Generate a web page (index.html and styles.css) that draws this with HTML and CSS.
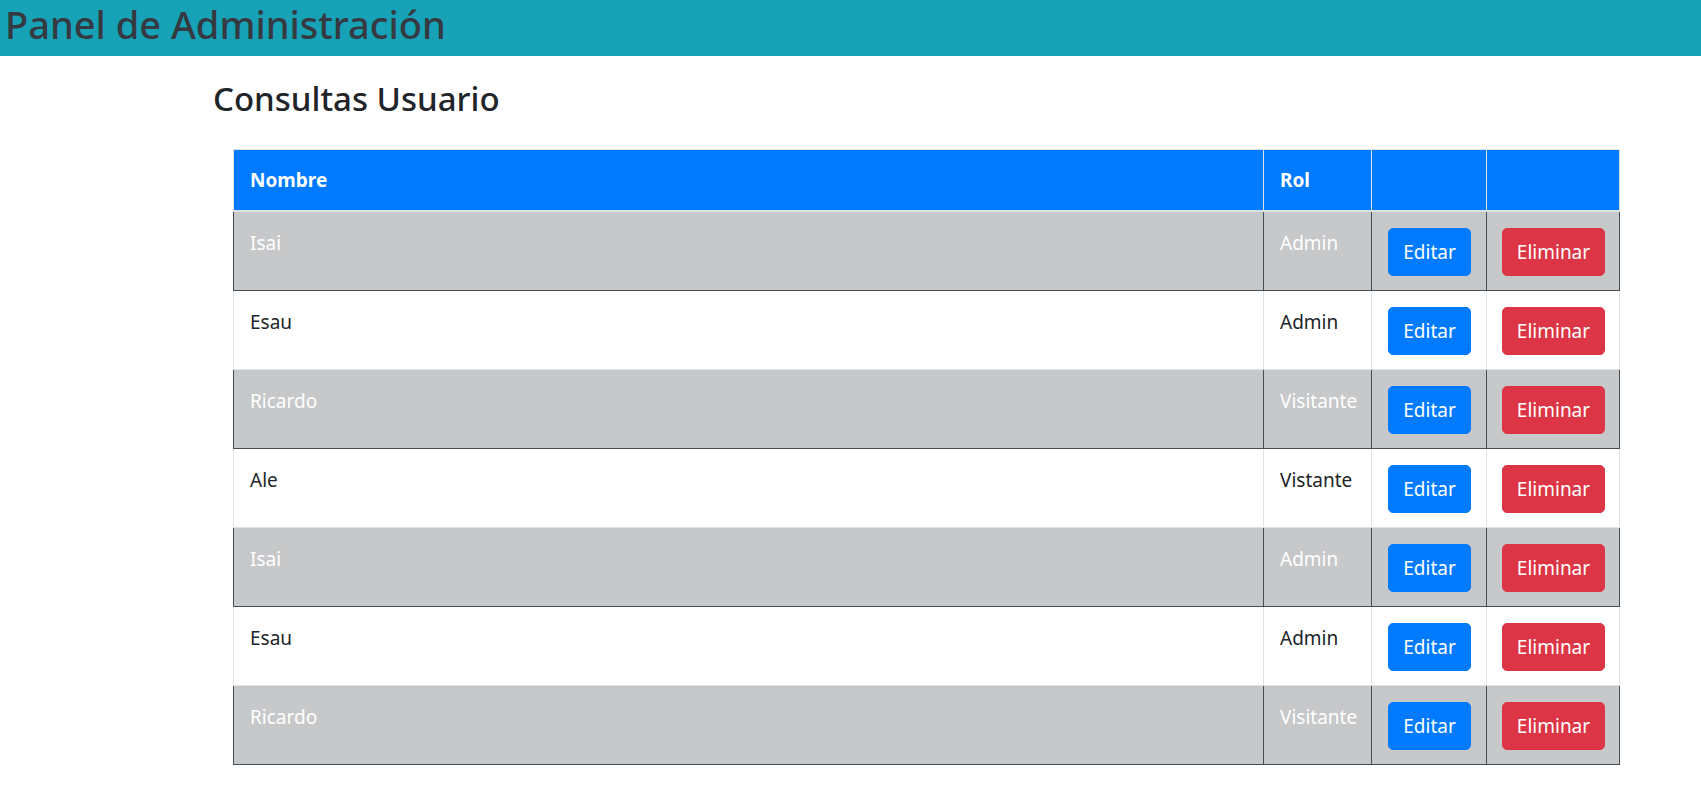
FILE: index.html
```html
<!DOCTYPE html>
<html lang="es">
<head>
<meta charset="utf-8">
<title>Panel de Administración</title>
<link rel="stylesheet" href="styles.css">
</head>
<body>
<header class="topbar">
  <h1 class="brand">Panel de Administración</h1>
</header>
<main class="content">
  <h2 class="section-title">Consultas Usuario</h2>
  <table class="users">
    <colgroup>
      <col class="c-name"><col class="c-role"><col class="c-edit"><col class="c-del">
    </colgroup>
    <thead>
      <tr><th>Nombre</th><th>Rol</th><th></th><th></th></tr>
    </thead>
    <tbody>
      <tr class="shaded"><td>Isai</td><td>Admin</td><td><button class="btn btn-edit">Editar</button></td><td><button class="btn btn-del">Eliminar</button></td></tr>
      <tr><td>Esau</td><td>Admin</td><td><button class="btn btn-edit">Editar</button></td><td><button class="btn btn-del">Eliminar</button></td></tr>
      <tr class="shaded"><td>Ricardo</td><td>Visitante</td><td><button class="btn btn-edit">Editar</button></td><td><button class="btn btn-del">Eliminar</button></td></tr>
      <tr><td>Ale</td><td>Vistante</td><td><button class="btn btn-edit">Editar</button></td><td><button class="btn btn-del">Eliminar</button></td></tr>
      <tr class="shaded"><td>Isai</td><td>Admin</td><td><button class="btn btn-edit">Editar</button></td><td><button class="btn btn-del">Eliminar</button></td></tr>
      <tr><td>Esau</td><td>Admin</td><td><button class="btn btn-edit">Editar</button></td><td><button class="btn btn-del">Eliminar</button></td></tr>
      <tr class="shaded"><td>Ricardo</td><td>Visitante</td><td><button class="btn btn-edit">Editar</button></td><td><button class="btn btn-del">Eliminar</button></td></tr>
    </tbody>
  </table>
</main>
</body>
</html>
```
FILE: styles.css
```css
* { box-sizing: border-box; }
body {
  margin: 0;
  font-family: "Noto Sans", "Open Sans", sans-serif;
  color: #212529;
  background: #fff;
}
.topbar {
  background: #17a2b8;
  height: 56px;
  padding-left: 5px;
}
.brand {
  margin: 0;
  font-size: 38px;
  line-height: 48px;
  font-weight: 500;
  color: #343a40;
}
.content {
  padding: 0 82px 0 213px;
}
.section-title {
  margin: 23px 0 30px;
  font-size: 33px;
  line-height: 40px;
  font-weight: 500;
  color: #212529;
}
.users {
  margin-left: 20px;
  width: 1386px;
  border-collapse: collapse;
  table-layout: fixed;
  font-size: 19px;
}
.c-name { width: 1030px; }
.c-role { width: 108px; }
.c-edit { width: 115px; }
.c-del { width: 133px; }
.users th {
  background: #007bff;
  color: #fff;
  font-weight: 700;
  text-align: left;
  padding: 15px 16px;
  line-height: 30px;
  border: 1px solid #dee2e6;
  border-bottom-width: 2px;
}
.users td {
  padding: 16px 15px 14px 16px;
  line-height: 30px;
  vertical-align: top;
  border: 1px solid #dee2e6;
  white-space: nowrap;
}
.users tr.shaded td {
  background: #c6c8ca;
  color: #fff;
  border-color: #454d55;
}
.btn {
  font-family: inherit;
  font-size: 19px;
  line-height: 30px;
  padding: 8px 0;
  border: 1px solid transparent;
  border-radius: 5px;
  color: #fff;
  cursor: pointer;
  display: block;
}
.btn-edit { background: #007bff; border-color: #007bff; width: 83px; }
.btn-del { background: #dc3545; border-color: #dc3545; width: 103px; margin-left: -1px; }
```
